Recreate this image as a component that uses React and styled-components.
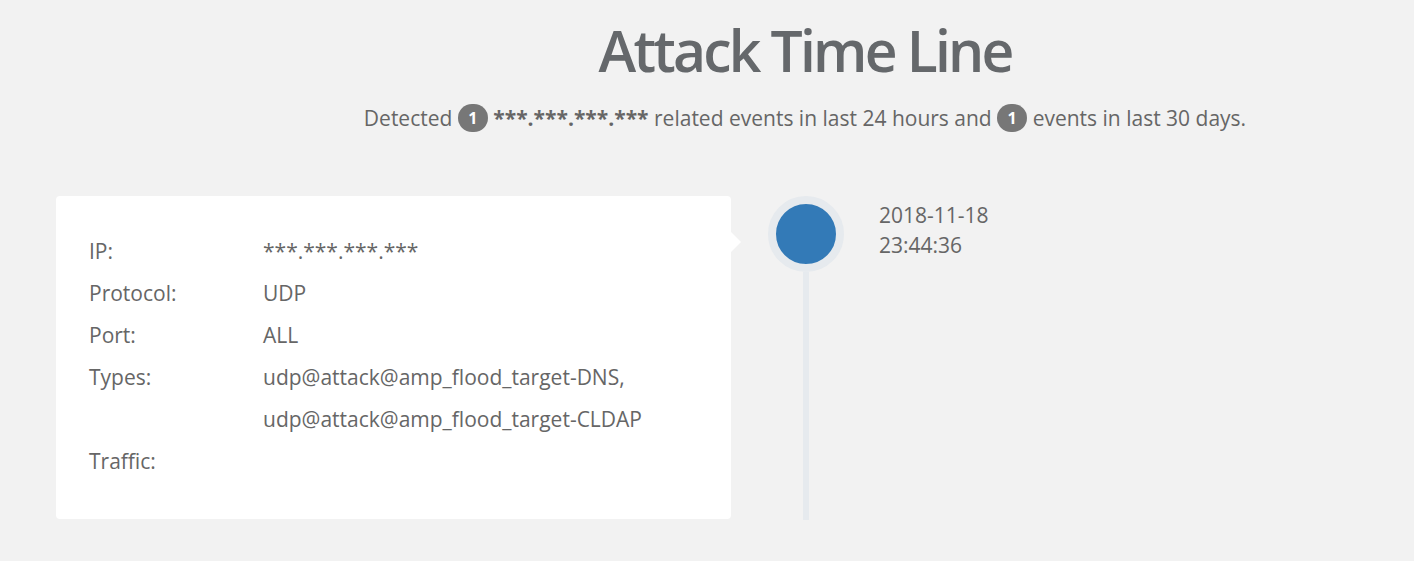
import React from 'react';
import styled, { createGlobalStyle } from 'styled-components';

const GlobalStyle = createGlobalStyle`
  body {
    margin: 0;
    background: #f2f2f2;
    font-family: "Open Sans", "Noto Sans", sans-serif;
    color: #666;
  }
`;

const Page = styled.div`
  min-height: 561px;
`;

const Header = styled.header`
  padding-left: 196px;
  text-align: center;
`;

const Title = styled.h1`
  margin: 16px 0 0;
  font-size: 57px;
  font-weight: 600;
  line-height: 68px;
  letter-spacing: -2.8px;
  color: #65686b;
`;

const Summary = styled.p`
  margin: 19px 0 0;
  font-size: 21px;
  line-height: 30px;
  color: #666;
`;

const Badge = styled.span`
  display: inline-block;
  min-width: 12px;
  padding: 2px 9px;
  border-radius: 14px;
  background: #777;
  color: #fff;
  font-size: 16px;
  font-weight: 700;
  line-height: 24px;
  vertical-align: middle;
  position: relative;
  top: -2px;
`;

const Strong = styled.b`
  font-weight: 700;
`;

const Timeline = styled.section`
  display: flex;
  margin-top: 62px;
  padding-left: 56px;
`;

const Card = styled.div`
  position: relative;
  width: 675px;
  box-sizing: border-box;
  padding: 34px 33px 37px;
  background: #fff;
  border-radius: 4px;

  &::after {
    content: '';
    position: absolute;
    right: -10px;
    top: 36px;
    border-top: 10px solid transparent;
    border-bottom: 10px solid transparent;
    border-left: 10px solid #fff;
  }
`;

const InfoGrid = styled.dl`
  display: grid;
  grid-template-columns: 174px 1fr;
  margin: 0;
  font-size: 21px;
  line-height: 42px;
  color: #666;
`;

const Label = styled.dt`
  margin: 0;
`;

const Value = styled.dd`
  margin: 0;
`;

const Track = styled.div`
  display: flex;
  flex-direction: column;
  align-items: center;
  width: 76px;
  margin-left: 37px;
`;

const Dot = styled.div`
  width: 60px;
  height: 60px;
  border-radius: 50%;
  background: #337ab7;
  border: 8px solid #e6eaee;
  flex: none;
`;

const Line = styled.div`
  width: 6px;
  flex: 1;
  margin-bottom: -1px;
  background: #e6eaee;
`;

const Stamp = styled.div`
  margin-left: 35px;
  padding-top: 4px;
  font-size: 21px;
  line-height: 30px;
  color: #666;
`;

const details = [
  { label: 'IP:', value: ['***.***.***.***'] },
  { label: 'Protocol:', value: ['UDP'] },
  { label: 'Port:', value: ['ALL'] },
  { label: 'Types:', value: ['udp@attack@amp_flood_target-DNS,', 'udp@attack@amp_flood_target-CLDAP'] },
  { label: 'Traffic:', value: [''] },
];

export default function App() {
  return (
    <Page>
      <GlobalStyle />
      <Header>
        <Title>Attack Time Line</Title>
        <Summary>
          Detected <Badge>1</Badge> <Strong>***.***.***.***</Strong> related events in last 24 hours and <Badge>1</Badge> events in last 30 days.
        </Summary>
      </Header>
      <Timeline>
        <Card>
          <InfoGrid>
            {details.map((d) => (
              <React.Fragment key={d.label}>
                <Label>{d.label}</Label>
                <Value>
                  {d.value.map((v, i) => (
                    <div key={i}>{v || '\u00a0'}</div>
                  ))}
                </Value>
              </React.Fragment>
            ))}
          </InfoGrid>
        </Card>
        <Track>
          <Dot />
          <Line />
        </Track>
        <Stamp>
          <div>2018-11-18</div>
          <div>23:44:36</div>
        </Stamp>
      </Timeline>
    </Page>
  );
}
